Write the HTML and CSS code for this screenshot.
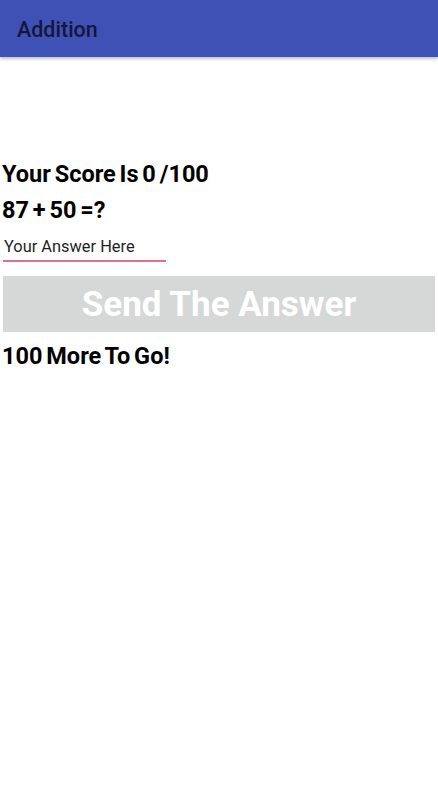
FILE: index.html
```html
<!DOCTYPE html>
<html lang="en">
<head>
  <meta charset="UTF-8">
  <meta name="viewport" content="width=device-width, initial-scale=1.0">
  <title>Addition</title>
  <link rel="stylesheet" href="styles.css">
</head>
<body>
  <header class="app-bar">
    <h1 class="app-title">Addition</h1>
  </header>

  <main class="content">
    <p class="score">Your Score Is 0 /100</p>
    <p class="question">87 + 50 =?</p>
    <div class="answer">
      <input class="answer-input" type="text" placeholder="Your Answer Here">
    </div>
    <button class="send-btn" disabled>Send The Answer</button>
    <p class="remaining">100 More To Go!</p>
  </main>
</body>
</html>
```

FILE: styles.css
```css
/* general styling */
* {
  box-sizing: border-box;
  margin: 0;
  padding: 0;
}

body {
  background-color: #ffffff;
  font-family: Roboto, "Noto Sans", sans-serif;
  color: #000000;
}

.app-bar {
  background-color: #3f51b5;
  height: 57px;
  display: flex;
  align-items: center;
  padding-left: 17px;
  box-shadow: 0 2px 3px rgba(0, 0, 0, .25);
}

.app-title {
  font-size: 21.5px;
  font-weight: 500;
  color: #15173a;
  padding-top: 2px;
}

.content {
  padding: 99px 3px 0 3px;
  display: flex;
  flex-direction: column;
}

.score,
.question,
.remaining {
  font-size: 23.5px;
  font-weight: 700;
  word-spacing: -2px;
  line-height: 36px;
  margin-left: -1px;
}

.answer {
  padding-top: 6px;
}

.answer-input {
  display: block;
  width: 163px;
  border: none;
  border-bottom: 2px solid #e0708f;
  font-family: Roboto, sans-serif;
  font-size: 16.4px;
  padding: 3px 1px 4px 1px;
  outline: none;
  background: transparent;
  color: #1f1f1f;
}

.answer-input::placeholder {
  color: #1f1f1f;
}

.send-btn {
  margin-top: 14px;
  height: 56px;
  background-color: #d6d7d7;
  border: none;
  color: #ffffff;
  font-family: Roboto, sans-serif;
  font-size: 35px;
  font-weight: 700;
}

.remaining {
  margin-top: 6px;
}
```
